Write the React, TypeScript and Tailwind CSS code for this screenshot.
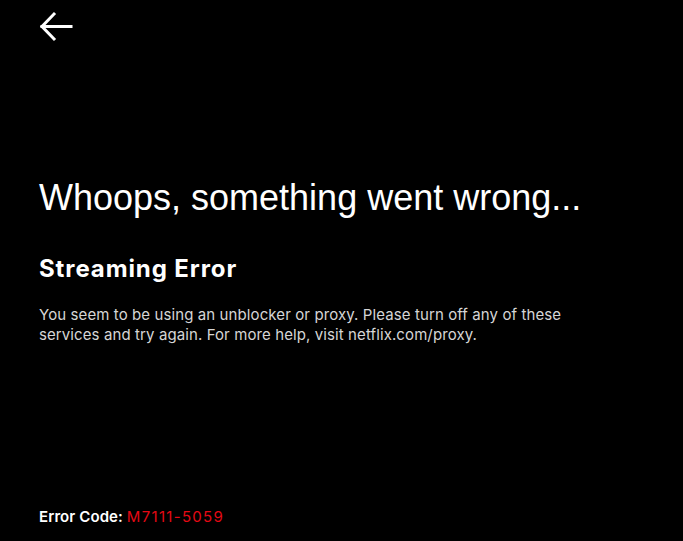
export default function App() {
  return (
    <div className="h-screen w-full bg-black text-white flex flex-col px-[39px] overflow-hidden" style={{ fontFamily: 'Inter, "Noto Sans", sans-serif' }}>
      {/* Back */}
      <div className="pt-[11px] flex">
        <svg width="34" height="32" viewBox="0 0 34 32" fill="none" stroke="white" strokeWidth="3" strokeLinecap="square">
          <path d="M3 15.5 H32" />
          <path d="M15 3 L3 15.5 L15 28" />
        </svg>
      </div>

      {/* Message */}
      <div className="mt-[133px]">
        <h1 className="text-[36px] leading-[44px] font-normal" style={{ fontFamily: '"Liberation Sans", Arial, sans-serif' }}>
          Whoops, something went wrong...
        </h1>
        <h2 className="mt-[34px] text-[24px] leading-[30px] font-bold tracking-[0.9px]">Streaming Error</h2>
        <p className="mt-[21px] text-[15px] leading-[20px] text-[#d6d6d6] tracking-[0.1px] max-w-[540px]">
          You seem to be using an unblocker or proxy. Please turn off any of these services and try again. For more help, visit netflix.com/proxy.
        </p>
      </div>

      {/* Footer */}
      <div className="mt-auto pb-[15px] text-[15px] leading-[18px]">
        <span className="font-semibold tracking-[0.1px]">Error Code: </span>
        <span className="text-[#e50914] tracking-[1.3px]">M7111-5059</span>
      </div>
    </div>
  )
}
